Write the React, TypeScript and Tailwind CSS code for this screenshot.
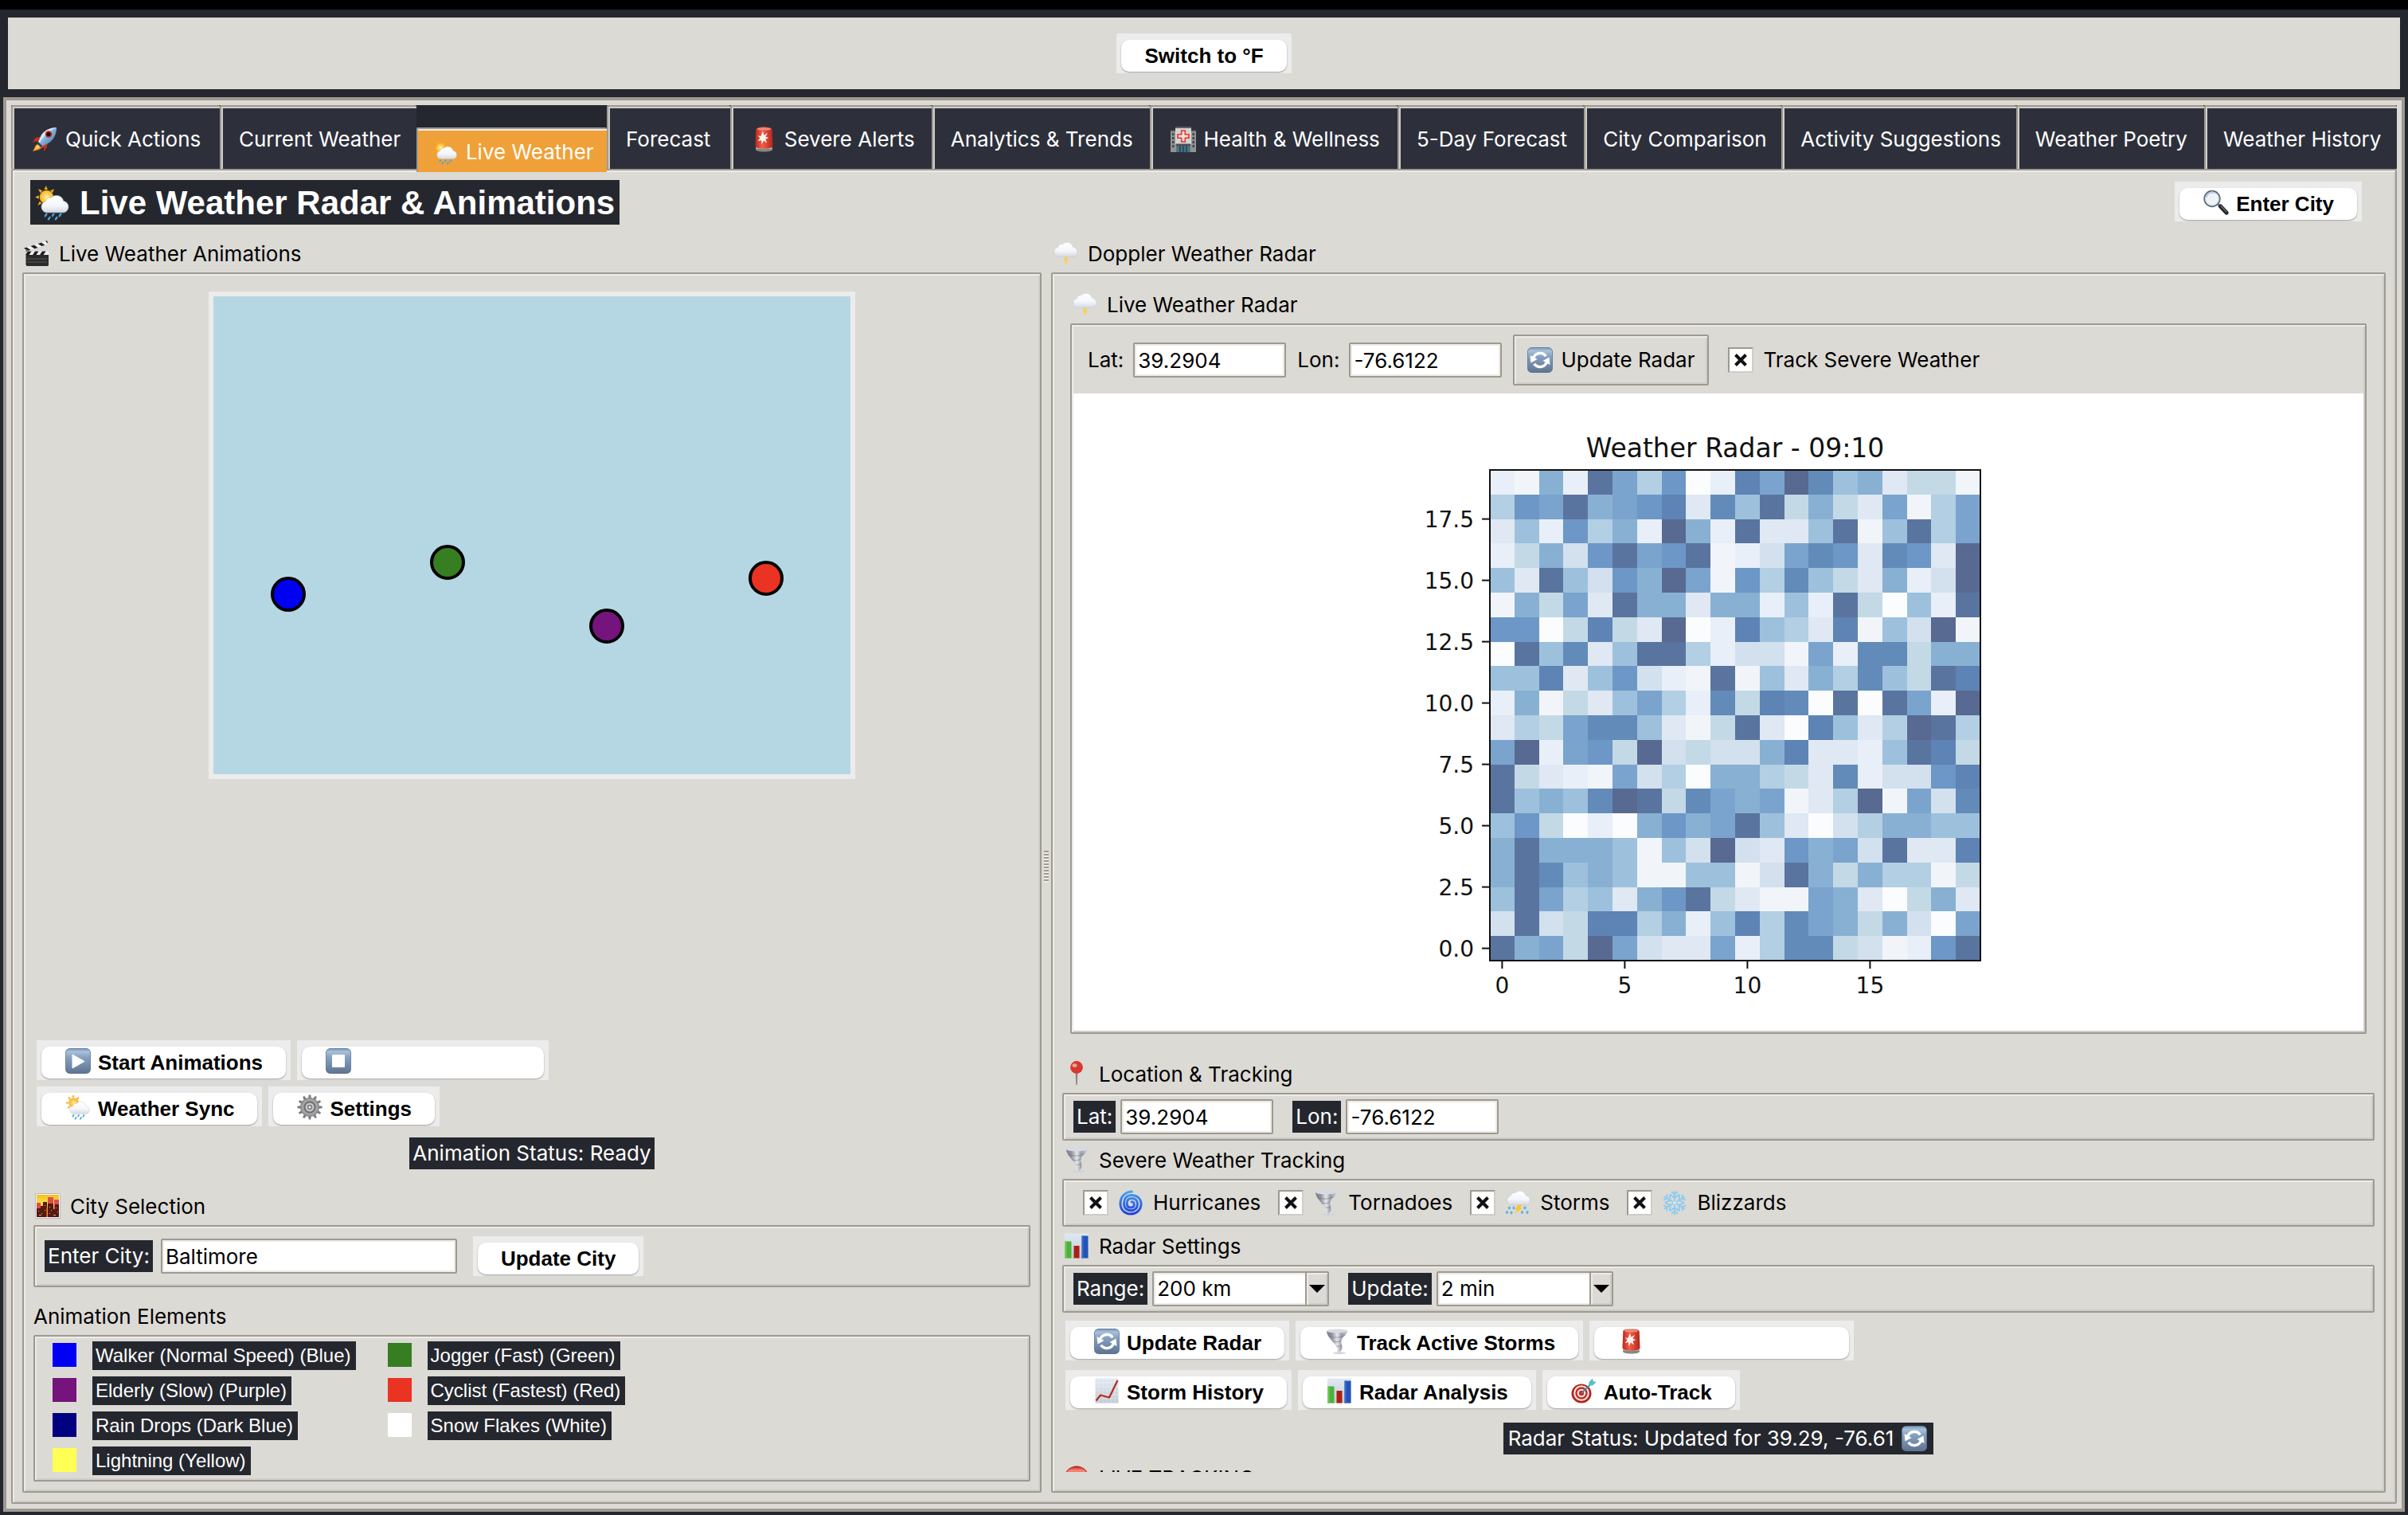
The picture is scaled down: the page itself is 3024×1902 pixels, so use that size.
import React, { ReactNode } from 'react';

/* ---------- icons ---------- */

type IconProps = { className?: string };

function Glyph({ className = 'w-8 h-8', children }: IconProps & { children: ReactNode }) {
  return (
    <svg viewBox="0 0 32 32" className={`${className} shrink-0`} aria-hidden="true">
      {children}
    </svg>
  );
}

const Cloud = ({ fill = 'url(#cloudFill)' }: { fill?: string }) => (
  <path
    d="M9 23.5a5.6 5.6 0 0 1-1.2-11 5 5 0 0 1 5.4-3.6 7.2 7.2 0 0 1 12.3 3.2 5.8 5.8 0 0 1 .3 11.4z"
    fill={fill}
    stroke="#c3cad6"
    strokeWidth=".5"
  />
);

function Defs() {
  return (
    <svg className="absolute h-0 w-0" aria-hidden="true">
      <defs>
        <linearGradient id="cloudFill" x1="0" y1="0" x2="0" y2="1">
          <stop offset="0" stopColor="#ffffff" />
          <stop offset=".6" stopColor="#f4f6fa" />
          <stop offset="1" stopColor="#d3d8e2" />
        </linearGradient>
        <radialGradient id="sunFill">
          <stop offset="0" stopColor="#fff2a0" />
          <stop offset="1" stopColor="#f5ae1c" />
        </radialGradient>
        <linearGradient id="tileFill" x1="0" y1="0" x2="0" y2="1">
          <stop offset="0" stopColor="#7c9cc0" />
          <stop offset=".12" stopColor="#a9c0d8" />
          <stop offset=".35" stopColor="#86a1c1" />
          <stop offset="1" stopColor="#5e7591" />
        </linearGradient>
        <linearGradient id="steel" x1="0" y1="0" x2="1" y2="0">
          <stop offset="0" stopColor="#7b808c" />
          <stop offset=".25" stopColor="#8f939e" />
          <stop offset=".5" stopColor="#e6e8ee" />
          <stop offset=".7" stopColor="#9a9eaa" />
          <stop offset="1" stopColor="#c9ccd6" />
        </linearGradient>
        <linearGradient id="rocketBody" x1="0" y1="0" x2="1" y2="1">
          <stop offset="0" stopColor="#f4f8fc" />
          <stop offset=".5" stopColor="#7fb0dc" />
          <stop offset="1" stopColor="#3d6a9c" />
        </linearGradient>
        <linearGradient id="flame" x1="1" y1="0" x2="0" y2="1">
          <stop offset="0" stopColor="#fff3b0" />
          <stop offset="1" stopColor="#f6a700" />
        </linearGradient>
        <linearGradient id="sirenRed" x1="0" y1="0" x2="1" y2="0">
          <stop offset="0" stopColor="#b8281b" />
          <stop offset=".4" stopColor="#f2604c" />
          <stop offset="1" stopColor="#b3241a" />
        </linearGradient>
        <linearGradient id="swirl" x1="0" y1="0" x2="0" y2="1">
          <stop offset="0" stopColor="#4aa3ea" />
          <stop offset="1" stopColor="#1d3fe0" />
        </linearGradient>
        <linearGradient id="paper" x1="0" y1="0" x2="0" y2="1">
          <stop offset="0" stopColor="#dfe9f3" />
          <stop offset="1" stopColor="#c3cbd2" />
        </linearGradient>
        <linearGradient id="dusk" x1="0" y1="0" x2="0" y2="1">
          <stop offset="0" stopColor="#f2c21f" />
          <stop offset=".4" stopColor="#fbe04a" />
          <stop offset="1" stopColor="#e0631d" />
        </linearGradient>
        <linearGradient id="ball" x1="0" y1="0" x2="0" y2="1">
          <stop offset="0" stopColor="#c9281f" />
          <stop offset=".15" stopColor="#f5857a" />
          <stop offset="1" stopColor="#c8251a" />
        </linearGradient>
      </defs>
    </svg>
  );
}

const Rocket = ({ className }: IconProps) => (
  <Glyph className={className}>
    <path d="M11 12.5 4.5 14 1 20l4-1.5 3 .3z" fill="#c62f1b" />
    <path d="M20 20.5 18.8 26l-4 5.5.4-4.600-2.200-3.400z" fill="#c62f1b" />
    <path d="M10 20.5 5 23l-3.5 7.8L9.5 29l5-4z" fill="#f0641e" />
    <path d="M9 21.5 5.5 24 1.2 31l7.2-3.400 4.600-3.600z" fill="url(#flame)" />
    <path d="M31 1c-8 0-14.500 3.500-19 9.500L8 19l5.500 5.500 8.500-4.500C28 15.500 31 9 31 1z" fill="url(#rocketBody)" />
    <path d="M31 1c-8 0-14.500 3.500-19 9.500L8 19l2 2C13 13 22 5 31 1z" fill="#e9eff6" opacity=".75" />
    <circle cx="21" cy="9.500" r="4.200" fill="#c0281c" />
    <circle cx="21" cy="9.500" r="2.500" fill="#170c10" />
    <path d="m8 19-1.500 2.500 4.500 4.500 2.500-1.500z" fill="#39404c" />
  </Glyph>
);

const SunRain = ({ className }: IconProps) => (
  <Glyph className={className}>
    <g fill="#f2a81d">
      <path d="m10 0 1.600 3.600H8.400zM3 3l3.800 1.600L4.700 6.700zM17.500 3l-1.600 3.700-2.100-2.100zM0 10.500l3.500-1.600v3.200zM2.500 18l1.700-3.700 2 2z" />
    </g>
    <circle cx="10.500" cy="10.500" r="6.300" fill="url(#sunFill)" />
    <g transform="translate(2.500 3) scale(.92)">
      <Cloud />
    </g>
    <g stroke="#4aa6dc" strokeWidth="1.700" strokeLinecap="round">
      <path d="m10.500 26-1.200 1.800M17 26l-1 1.600M23.500 26l-1.200 1.800M13.500 29l-1.200 1.800M20 29l-1.200 1.800" />
    </g>
  </Glyph>
);

const ThunderCloud = ({ className }: IconProps) => (
  <Glyph className={className}>
    <g transform="translate(-2 -5) scale(1.080)">
      <Cloud />
    </g>
    <path d="M15 21h4.500l-1.800 3.400h2.600L14.600 31l1.600-5h-2.500z" fill="#f7cf56" />
  </Glyph>
);

const StormCloud = ({ className }: IconProps) => (
  <Glyph className={className}>
    <g transform="translate(-1 -6) scale(1.060)">
      <Cloud />
    </g>
    <path d="M17 18.500h4l-2 4h3.500L12 30l3.500-5.500h-3.500z" fill="#f8c72c" />
    <g fill="#5cb4e4">
      <ellipse cx="5.500" cy="22.500" rx="1.600" ry="2" />
      <ellipse cx="11" cy="22.500" rx="1.500" ry="1.900" />
      <ellipse cx="2.500" cy="28" rx="1.600" ry="2" />
      <ellipse cx="8" cy="28.500" rx="1.600" ry="2" />
      <ellipse cx="25" cy="22.500" rx="1.600" ry="2" />
      <ellipse cx="21.500" cy="28" rx="1.600" ry="2" />
      <ellipse cx="28" cy="28" rx="1.600" ry="2" />
    </g>
  </Glyph>
);

const Siren = ({ className }: IconProps) => (
  <Glyph className={className}>
    <path d="M6 26h21v2.500c0 2-4 3-10.500 3S6 30.500 6 28.500z" fill="#8a8682" />
    <path d="M6 27h21" stroke="#c9c6c2" strokeWidth="1" />
    <path d="M5.500 24 6.300 3.500C6.400 1.500 10 .5 16.500.5s10.100 1 10.200 3L27.500 24c0 2-4 3.500-11 3.500S5.500 26 5.500 24z" fill="url(#sirenRed)" />
    <path d="M8 3c0-1 3.500-1.700 8.500-1.700s8.500.7 8.500 1.700-3.500 1.500-8.500 1.500S8 4 8 3z" fill="#f08b7c" />
    <path d="m15 5.500 1.500 5.200 4.500-3-2.500 5 4 1.300-4 1.600 1.500 5-4-3-2.500 4.700-.5-5.300-4.500 1.300 3-4-3-3 4 .8z" fill="#fff" opacity=".92" />
  </Glyph>
);

const Hospital = ({ className }: IconProps) => (
  <Glyph className={className}>
    <path d="M0 5h32v27H0z" fill="#6d7376" />
    <path d="M0 5h7v27H0zM25 5h7v27h-7z" fill="#8f9392" />
    <path d="M6 1h20v21H6z" fill="#d5d3cf" />
    <path d="M6 0h20v2H6zM0 4.500h6v1.500H0zM26 4.500h6v1.500h-6z" fill="#5c5f60" />
    <g fill="#3e4a50">
      <path d="M2 8h2.500v3H2zM2 13h2.500v3H2zM2 18h2.500v3H2zM2 23h2.500v3H2zM27.500 8H30v3h-2.500zM27.500 13H30v3h-2.500zM27.500 18H30v3h-2.500zM27.500 23H30v3h-2.500z" />
    </g>
    <path d="M13.700 5h4.600v4.700H23v4.600h-4.700V19h-4.600v-4.700H9V9.700h4.700z" fill="#f5dedb" stroke="#d93a32" strokeWidth="1.600" />
    <path d="M8 23h16v9H8z" fill="#4a7086" />
    <path d="M12 24v8M16 24v8M20 24v8" stroke="#28414f" strokeWidth="1.500" />
    <path d="M7 21.500h18V24H7z" fill="#4b4e50" />
  </Glyph>
);

const Magnifier = ({ className }: IconProps) => (
  <Glyph className={className}>
    <path d="m18.500 18.500 3 3" stroke="#8b97a5" strokeWidth="3" />
    <path d="m21.500 21 7.500 8" stroke="#22262b" strokeWidth="5.200" strokeLinecap="round" />
    <path d="m22 20.500 7 7.500" stroke="#6a7178" strokeWidth="1.200" strokeLinecap="round" />
    <circle cx="11" cy="11.500" r="9.800" fill="#eef3f7" stroke="#5d6a78" strokeWidth="1.800" />
    <path d="M4 9a7.600 7.600 0 0 1 10-5" stroke="#a7c6e6" strokeWidth="1.800" fill="none" strokeLinecap="round" />
    <circle cx="11" cy="11.500" r="8.300" fill="none" stroke="#c6d2dd" strokeWidth=".8" />
  </Glyph>
);

const Clapper = ({ className }: IconProps) => (
  <Glyph className={className}>
    <path d="M2.500 17H31v13.500a1.500 1.500 0 0 1-1.500 1.500h-25a2 2 0 0 1-2-2z" fill="#2b2b2b" />
    <path d="M2.500 13.500H31V18H2.500z" fill="#efefef" />
    <path d="M5 13.500h4.500l-3 4.500h-4v-1zM14 13.500h4.500l-3 4.500H11zM23 13.500h4.500l-3 4.500H20z" fill="#1f1f1f" />
    <path d="M0 9.500 29 0l1.500 4.200L2 14z" fill="#f2f2f2" />
    <path d="m3.500 8.400 5 3.400-4 1.300L0 9.500zM13 5.500l4.600 3.400-4.300 1.400L8.500 6.900zM22 2.500l4.500 3.200-4.300 1.400-4.600-3.200zM29 0l1.500 4.200-3.500-3.400z" fill="#242424" />
    <path d="M4 23h25M4 27h25" stroke="#5b5b5b" strokeWidth="1" />
    <circle cx="3.500" cy="13" r="1.600" fill="#888" />
  </Glyph>
);

const Tile = () => (
  <>
    <rect x=".1" y=".1" width="31.800" height="31.800" rx="5.500" fill="#5a7290" />
    <rect x=".8" y=".8" width="30.400" height="30.400" rx="5" fill="url(#tileFill)" />
  </>
);

const Play = ({ className }: IconProps) => (
  <Glyph className={className}>
    <Tile />
    <path d="M9 8v17l15-8.500z" fill="#fff" stroke="#fff" strokeWidth="1" strokeLinejoin="round" />
  </Glyph>
);

const Stop = ({ className }: IconProps) => (
  <Glyph className={className}>
    <Tile />
    <rect x="8" y="8" width="16" height="16" rx="1" fill="#fff" />
  </Glyph>
);

const Refresh = ({ className }: IconProps) => (
  <Glyph className={className}>
    <Tile />
    <g fill="none" stroke="#fff" strokeWidth="3.400">
      <path d="M7.300 15A9 9 0 0 1 22 9.500" transform="rotate(14 16 16)" />
      <path d="M24.700 17A9 9 0 0 1 10 22.500" transform="rotate(14 16 16)" />
    </g>
    <path d="m3.500 10 1 9.500 8-4.500zM28.500 22l-1-9.500-8 4.500z" fill="#fff" />
  </Glyph>
);

const Gear = ({ className }: IconProps) => (
  <Glyph className={className}>
    <g fill="#7a7a7c">
      {[0, 30, 60, 90, 120, 150, 180, 210, 240, 270, 300, 330].map((a) => (
        <path key={a} d="m14 6 .8-5.600h2.400L18 6z" transform={`rotate(${a} 16 16)`} />
      ))}
    </g>
    <circle cx="16" cy="16" r="12" fill="#8b8b8d" />
    <circle cx="16" cy="16" r="10.500" fill="#a3a3a5" />
    <circle cx="16" cy="16" r="7.500" fill="#6d6d70" />
    <circle cx="16" cy="16" r="5.500" fill="#c9c9cb" />
    <circle cx="16" cy="16" r="3.200" fill="#7d7d80" />
    <circle cx="16" cy="16" r="1.600" fill="#f3f3f3" />
  </Glyph>
);

const CitySunset = ({ className }: IconProps) => (
  <Glyph className={className}>
    <rect x=".5" y=".5" width="31" height="31" fill="#f5f5f5" stroke="#b9bdc2" />
    <rect x="2" y="2" width="28" height="28" fill="url(#dusk)" />
    <path d="M2 12h5v18H2zM16 5h7v25h-7zM24 8h6v22h-6z" fill="#d9504a" />
    <path d="M2 19h5v-3h3v-5h5v9h1v-7h7v7h2v-6h5v16H2z" fill="#571913" />
    <path d="M14.500 18h1.500v12h-1.500z" fill="#f4902a" />
    <g fill="#e9b04a">
      <path d="M4 22h1v1H4zM8 25h1v1H8zM12 15h1v1h-1zM12 21h1v1h-1zM18 17h1v1h-1zM20 21h1v1h-1zM26 18h1v1h-1zM28 23h1v1h-1zM18 25h1v1h-1zM5 27h3v1H5zM23 27h3v1h-3z" />
    </g>
  </Glyph>
);

const Pin = ({ className }: IconProps) => (
  <Glyph className={className}>
    <path d="M14.700 14h2.600l-.5 15c0 1.500-1.600 1.500-1.600 0z" fill="#93807a" />
    <circle cx="16" cy="8" r="7.900" fill="#d63a30" />
    <ellipse cx="13.500" cy="5.500" rx="3" ry="2.300" fill="#f4a096" />
  </Glyph>
);

const Tornado = ({ className }: IconProps) => (
  <Glyph className={className}>
    <ellipse cx="19" cy="30.700" rx="8" ry="1.200" fill="#cfd0dc" />
    <path
      d="M3 3c.2 4 2.300 7.500 6 11.500 3 3.300 5.500 6 6.800 9.500.8 2.400.7 4.500.2 7 3.500-1 6.500-3.500 6.500-7.500 0-3.500-2-5.500-1-9 1.200-4 7-6.500 8-11.500C25 .5 7 .5 3 3z"
      fill="url(#steel)"
    />
    <ellipse cx="16.200" cy="3" rx="13" ry="2.400" fill="#d7dae2" />
    <path d="M5.500 9c6 3 14 3 20.500-1M10.500 16c4 1.500 7 1 11-1M15.500 22c2 .6 4 .4 6.500-.8" stroke="#666b77" strokeWidth="1" fill="none" opacity=".55" />
  </Glyph>
);

const Cyclone = ({ className }: IconProps) => (
  <Glyph className={className}>
    <path
      d="M17.500 2C9 2 3 8.500 3 17c0 8 5.500 13 13 13s13-5.500 13-12.500S23.500 6.500 17 6.500 7.500 11 7.500 17s4 8.800 8.800 8.800 8.200-3.500 8.200-8.100-3-7.200-7.300-7.200-6 2.700-6 6.200 2 5.300 4.800 5.300 4.300-1.800 4.300-4-1.400-3.300-3.200-3.300"
      fill="none"
      stroke="url(#swirl)"
      strokeWidth="3"
      strokeLinecap="round"
    />
  </Glyph>
);

const Snowflake = ({ className }: IconProps) => (
  <Glyph className={className}>
    <g fill="none" stroke="#8ccbf0" strokeWidth="1.800" strokeLinecap="round">
      {[0, 60, 120, 180, 240, 300].map((a) => (
        <path key={a} d="M16 16V1.500M16 5.500l-3.500-3M16 5.500l3.500-3M16 10l-5-4M16 10l5-4" transform={`rotate(${a} 16 16)`} />
      ))}
    </g>
    <circle cx="16" cy="16" r="2" fill="#cdeafb" />
  </Glyph>
);

const BarChart = ({ className }: IconProps) => (
  <Glyph className={className}>
    <rect x="1" y=".5" width="30" height="31" fill="url(#paper)" />
    <path d="M1.500 10.500h8V31.500h-8z" fill="#4db23a" />
    <path d="M12.500 16h7v15.500h-7z" fill="#ad1f16" />
    <path d="M22.500 3.500h8V31.500h-8z" fill="#2453b8" />
    <path d="M1.500 10.500h2V31.500h-2z" fill="#6acb55" />
    <path d="M22.500 3.500h2V31.500h-2z" fill="#3c6fd2" />
  </Glyph>
);

const LineChart = ({ className }: IconProps) => (
  <Glyph className={className}>
    <rect x="1.500" y=".5" width="29" height="31" fill="url(#paper)" />
    <path d="M6 1v30M11 1v30M16 1v30M21 1v30M26 1v30M2 6h28M2 11h28M2 16h28M2 21h28M2 26h28" stroke="#fff" strokeWidth=".5" opacity=".6" />
    <path d="M2.500 28.500 8 21.500l11 3L29.500 3" stroke="#b22a20" strokeWidth="2.200" fill="none" strokeLinejoin="round" />
  </Glyph>
);

const Target = ({ className }: IconProps) => (
  <Glyph className={className}>
    <ellipse cx="13" cy="19.500" rx="12.500" ry="12" fill="#b3251d" />
    <circle cx="13" cy="19" r="9.800" fill="#f6e9e7" />
    <circle cx="13" cy="19" r="7.700" fill="#c32d24" />
    <circle cx="13" cy="19" r="5.300" fill="#f6e9e7" />
    <circle cx="13" cy="19" r="3.200" fill="#c32d24" />
    <path d="m13 19 11-10.500" stroke="#3b8f9c" strokeWidth="1.800" />
    <path d="m22 9.500.5-4.500L27 .5l.8 3.700 4 .8-4.600 4.300z" fill="#5bbcc8" />
  </Glyph>
);

const RedBall = ({ className }: IconProps) => (
  <Glyph className={className}>
    <circle cx="16" cy="16" r="15.500" fill="#b3241b" />
    <circle cx="16" cy="16" r="14.500" fill="url(#ball)" />
  </Glyph>
);

/* ---------- shared widgets ---------- */

function Frame({
  icon,
  title,
  children,
  className = '',
  bodyClass = '',
}: {
  icon?: ReactNode;
  title: string;
  children: ReactNode;
  className?: string;
  bodyClass?: string;
}) {
  return (
    <section className={`flex flex-col ${className}`}>
      <h2 className={`flex h-10 shrink-0 items-start leading-[34px] ${icon ? 'gap-3 px-0.5' : ''}`}>
        {icon}
        <span>{title}</span>
      </h2>
      <div
        className={`rounded-[2px] border-2 border-[#9e9a91] p-0.5 shadow-[inset_2px_2px_0_#eeebe7,inset_-2px_-2px_0_#cfcdc8] ${bodyClass}`}
      >
        {children}
      </div>
    </section>
  );
}

function PushButton({ icon, label, className = '' }: { icon?: ReactNode; label?: string; className?: string }) {
  return (
    <div className={`bg-[#ececec] px-1.5 pt-2 pb-0.5 ${className}`}>
      <button
        type="button"
        aria-label={label ? undefined : 'Action'}
        className="flex h-10 w-full items-center gap-2 rounded-[10px] bg-white px-[29px] font-['Liberation_Sans',Arial,sans-serif] font-bold whitespace-nowrap shadow-[0_1px_2px_rgba(0,0,0,0.35)]"
      >
        {icon && <span className="mb-1 px-px">{icon}</span>}
        {label}
      </button>
    </div>
  );
}

function Field({ id, value, className }: { id: string; value: string; className: string }) {
  return (
    <input
      id={id}
      type="text"
      defaultValue={value}
      className={`h-11 rounded-[2px] border-2 border-[#9e9a91] bg-white px-1 shadow-[inset_0_0_0_2px_#eeebe7] outline-none ${className}`}
    />
  );
}

function Combo({ id, options }: { id: string; options: string[] }) {
  return (
    <div className="relative h-11 w-[222px] rounded-[2px] border-2 border-[#9e9a91] bg-white">
      <select
        id={id}
        className="h-10 w-full appearance-none bg-transparent px-1 shadow-[inset_2px_2px_0_#eeebe7,inset_-2px_-2px_0_#eeebe7] outline-none"
      >
        {options.map((o) => (
          <option key={o}>{o}</option>
        ))}
      </select>
      <span className="pointer-events-none absolute top-0 right-0 flex h-10 w-7 items-center justify-center border-l-2 border-[#9e9a91] bg-[#dcdad5] shadow-[inset_2px_2px_0_#eeebe7,inset_-2px_-2px_0_#cfcdc8]">
        <svg viewBox="0 0 20 10" className="h-2.5 w-5" aria-hidden="true">
          <path d="M0 0h20L10 10z" />
        </svg>
      </span>
    </div>
  );
}

function Check({ label, icon }: { label: string; icon?: ReactNode }) {
  return (
    <label className="flex items-center gap-3">
      <span className="relative h-8 w-8 shrink-0">
        <input
          type="checkbox"
          defaultChecked
          className="peer block h-8 w-8 appearance-none border-2 border-[#9e9a91] border-r-[#cfcdc8] border-b-[#cfcdc8] bg-white"
        />
        <svg
          viewBox="0 0 32 32"
          className="pointer-events-none absolute inset-0 hidden h-8 w-8 peer-checked:block"
          aria-hidden="true"
        >
          <path d="m9.500 9.500 13 13m0-13-13 13" stroke="#111" strokeWidth="4" />
        </svg>
      </span>
      {icon}
      <span>{label}</span>
    </label>
  );
}

function DarkLabel({ htmlFor, children }: { htmlFor: string; children: ReactNode }) {
  return (
    <label htmlFor={htmlFor} className="h-10 bg-[#25272e] px-1 leading-10 whitespace-nowrap text-white">
      {children}
    </label>
  );
}

/* ---------- tabs ---------- */

const TABS: { label: string; icon?: ReactNode; width: string }[] = [
  { label: 'Quick Actions', icon: <Rocket />, width: 'flex-[262_1_0]' },
  { label: 'Current Weather', width: 'flex-[247_1_0]' },
  { label: 'Live Weather', icon: <SunRain />, width: 'flex-[239_1_0]' },
  { label: 'Forecast', width: 'flex-[154_1_0]' },
  { label: 'Severe Alerts', icon: <Siren />, width: 'flex-[253_1_0]' },
  { label: 'Analytics & Trends', width: 'flex-[274_1_0]' },
  { label: 'Health & Wellness', icon: <Hospital />, width: 'flex-[312_1_0]' },
  { label: '5-Day Forecast', width: 'flex-[234_1_0]' },
  { label: 'City Comparison', width: 'flex-[248_1_0]' },
  { label: 'Activity Suggestions', width: 'flex-[295_1_0]' },
  { label: 'Weather Poetry', width: 'flex-[236_1_0]' },
  { label: 'Weather History', width: 'flex-[242_1_0]' },
];

function TabBar() {
  return (
    <nav role="tablist" className="flex h-20 bg-[#25272e] text-white">
      {TABS.map((t) => {
        const active = t.label === 'Live Weather';
        return (
          <button
            key={t.label}
            type="button"
            role="tab"
            aria-selected={active}
            className={`flex min-w-0 items-center rounded-t-[2px] border-t-2 border-l-2 border-[#9e9a91] pt-1 ${t.width} ${
              active
                ? 'relative z-10 mt-7 -mb-1 bg-[#f0a038] shadow-[inset_0_2px_0_#eeebe7]'
                : 'bg-[#2d303b] shadow-[inset_2px_2px_0_#cfcdc8]'
            }`}
          >
            <span className={`flex min-w-0 items-center gap-2.5 whitespace-nowrap ${active ? 'pl-4' : 'pl-[22px]'}`}>
              {t.icon && <span className="pl-0.5">{t.icon}</span>}
              {t.label}
            </span>
          </button>
        );
      })}
    </nav>
  );
}

/* ---------- animation panel ---------- */

const WALKERS = [
  { x: 100, y: 380, fill: '#0000f5' },
  { x: 300, y: 340, fill: '#377d22' },
  { x: 500, y: 420, fill: '#75147c' },
  { x: 700, y: 360, fill: '#ea3323' },
];

const LEGEND = [
  ['bg-[#0000f5]', 'Walker (Normal Speed) (Blue)'],
  ['bg-[#377d22]', 'Jogger (Fast) (Green)'],
  ['bg-[#75147c]', 'Elderly (Slow) (Purple)'],
  ['bg-[#ea3323]', 'Cyclist (Fastest) (Red)'],
  ['bg-[#000080]', 'Rain Drops (Dark Blue)'],
  ['bg-white', 'Snow Flakes (White)'],
  ['bg-[#ffff54]', 'Lightning (Yellow)'],
];

function AnimationPanel() {
  return (
    <Frame
      icon={<Clapper />}
      title="Live Weather Animations"
      className="min-w-0 flex-[1280_1_0]"
      bodyClass="flex min-h-0 flex-1 flex-col px-3 pb-3"
    >
      <svg viewBox="0 0 812 612" className="mt-5 w-[812px] self-center" role="img" aria-label="Animation canvas">
        <rect width="812" height="612" fill="#ececec" />
        <rect x="6" y="6" width="800" height="600" fill="#b5d7e4" />
        {WALKERS.map((w) => (
          <circle key={w.fill} cx={w.x} cy={w.y} r="20" fill={w.fill} stroke="#000" strokeWidth="4" />
        ))}
      </svg>
      <div className="flex-1" />
      <div className="flex gap-2 px-1">
        <PushButton icon={<Play />} label="Start Animations" />
        <PushButton icon={<Stop />} className="w-[316px]" />
      </div>
      <div className="mt-2 flex gap-2 px-1">
        <PushButton icon={<SunRain />} label="Weather Sync" />
        <PushButton icon={<Gear />} label="Settings" />
      </div>
      <p className="mt-3.5 h-10 self-center bg-[#25272e] px-1 leading-10 text-white">Animation Status: Ready</p>
      <Frame icon={<CitySunset />} title="City Selection" className="mt-[30px]" bodyClass="flex items-center px-3 py-3">
        <DarkLabel htmlFor="city">Enter City:</DarkLabel>
        <Field id="city" value="Baltimore" className="mr-5 ml-2.5 w-[372px]" />
        <PushButton label="Update City" />
      </Frame>
      <Frame title="Animation Elements" className="mt-5">
        <ul className="grid grid-cols-[auto_1fr] gap-x-10 pl-5 font-['Liberation_Sans',Arial,sans-serif] text-2xl">
          {LEGEND.map(([color, name]) => (
            <li key={name} className="flex h-11 items-center gap-5">
              <span className={`mb-0.5 h-[30px] w-[30px] ${color}`} />
              <span className="h-9 bg-[#25272e] pr-1.5 pl-1 leading-9 text-white">{name}</span>
            </li>
          ))}
        </ul>
      </Frame>
    </Frame>
  );
}

/* ---------- radar panel ---------- */

const SHADES: Record<string, string> = {
  '0': '#fafcfe',
  '1': '#f1f5fa',
  '2': '#e8eff8',
  '3': '#dfe8f3',
  '4': '#d3e0ee',
  '5': '#c3d9e6',
  '6': '#b2cfe3',
  '7': '#9dc1dc',
  '8': '#88b0d3',
  '9': '#7aa4cd',
  a: '#6c97c6',
  b: '#628bba',
  c: '#5e83b5',
  d: '#5a74a0',
  e: '#586a91',
};

/* One string per row, top row first; each character is an intensity level. */
const CELLS = [
  '2182d96a02c9eb783551',
  '6a9d89ac3b7d58539169',
  '372a682e82d337d17d69',
  '2584ad9ad1249ba3ba3e',
  '73d74a8e91a6b753824e',
  '18593d88388272d5072d',
  'aa05c53e02c763c174e1',
  '0d7b37dd6244192bb588',
  '77c37a421d17386b75dc',
  '281537962b5cb0d0d92e',
  '3659bb7315d30c736ed6',
  '9e29a5e45448c3327dc5',
  'd5321946088653b244ac',
  'd787bed5b989136e194b',
  '7a50208a89d730468877',
  '8d8887174e43a894d33c',
  '8db787117714d8586615',
  '7d96738ad53119830583',
  '4d45cc6827c6b9858409',
  'd895e9433926bb5412ad',
];

const Y_TICKS = [0, 2.5, 5, 7.5, 10, 12.5, 15, 17.5];
const X_TICKS = [0, 5, 10, 15];

function RadarPlot() {
  const size = 616;
  const cell = size / 20;
  const left = 523;
  const top = 96;
  const bottom = top + size;
  return (
    <svg
      viewBox="0 0 1620 800"
      className="block w-full bg-white font-['DejaVu_Sans',Verdana,sans-serif]"
      role="img"
      aria-label="Weather radar heat map"
    >
      <text x={left + size / 2} y={80} fontSize="33" textAnchor="middle" fill="#111">
        Weather Radar - 09:10
      </text>
      <g shapeRendering="crispEdges">
        {CELLS.map((row, r) =>
          row.split('').map((c, i) => (
            <rect key={`${r}-${i}`} x={left + i * cell} y={top + r * cell} width={cell} height={cell} fill={SHADES[c]} />
          )),
        )}
      </g>
      <rect x={left} y={top} width={size} height={size} fill="none" stroke="#111" strokeWidth="2" />
      {Y_TICKS.map((v) => {
        const y = bottom - (v + 0.5) * cell;
        return (
          <g key={v}>
            <path d={`M${left - 10} ${y}h10`} stroke="#111" strokeWidth="2" />
            <text x={left - 20} y={y + 10} fontSize="28" textAnchor="end" fill="#111">
              {v.toFixed(1)}
            </text>
          </g>
        );
      })}
      {X_TICKS.map((v) => {
        const x = left + (v + 0.5) * cell;
        return (
          <g key={v}>
            <path d={`M${x} ${bottom}v10`} stroke="#111" strokeWidth="2" />
            <text x={x} y={bottom + 41} fontSize="28" textAnchor="middle" fill="#111">
              {v}
            </text>
          </g>
        );
      })}
    </svg>
  );
}

function RadarPanel() {
  return (
    <Frame
      icon={<ThunderCloud />}
      title="Doppler Weather Radar"
      className="min-w-0 flex-[1676_1_0]"
      bodyClass="min-h-0 flex-1 flex flex-col px-3 pb-6"
    >
      <div className="min-h-0 flex-1 overflow-hidden">
        <Frame icon={<ThunderCloud />} title="Live Weather Radar" className="mx-2.5 mt-5">
          <div className="flex h-[84px] items-center px-[18px]">
            <label htmlFor="lat-top">Lat:</label>
            <Field id="lat-top" value="39.2904" className="mr-3.5 ml-3 w-48" />
            <label htmlFor="lon-top">Lon:</label>
            <Field id="lon-top" value="-76.6122" className="mr-3.5 ml-3 w-48" />
            <button
              type="button"
              className="mr-6 flex h-16 items-center gap-2.5 rounded-[2px] border-2 border-[#9e9a91] px-4 whitespace-nowrap shadow-[inset_2px_2px_0_#eeebe7,inset_-2px_-2px_0_#cfcdc8]"
            >
              <Refresh />
              Update Radar
            </button>
            <Check label="Track Severe Weather" />
          </div>
          <RadarPlot />
        </Frame>

        <Frame icon={<Pin />} title="Location & Tracking" className="mt-[34px]" bodyClass="flex items-center py-1.5 px-3">
          <DarkLabel htmlFor="lat">Lat:</DarkLabel>
          <Field id="lat" value="39.2904" className="mr-6 ml-1.5 w-48" />
          <DarkLabel htmlFor="lon">Lon:</DarkLabel>
          <Field id="lon" value="-76.6122" className="ml-1.5 w-48" />
        </Frame>

        <Frame
          icon={<Tornado />}
          title="Severe Weather Tracking"
          className="mt-2"
          bodyClass="flex h-[60px] items-center gap-[22px] pl-6"
        >
          <Check icon={<Cyclone />} label="Hurricanes" />
          <Check icon={<Tornado />} label="Tornadoes" />
          <Check icon={<StormCloud />} label="Storms" />
          <Check icon={<Snowflake />} label="Blizzards" />
        </Frame>

        <Frame icon={<BarChart />} title="Radar Settings" className="mt-2" bodyClass="flex items-center gap-1.5 py-1.5 px-3">
          <DarkLabel htmlFor="range">Range:</DarkLabel>
          <Combo id="range" options={['200 km', '100 km', '50 km']} />
          <span className="w-3" />
          <DarkLabel htmlFor="update">Update:</DarkLabel>
          <Combo id="update" options={['2 min', '5 min', '10 min']} />
        </Frame>

        <div className="mt-2.5 flex gap-2 px-1">
          <PushButton icon={<Refresh />} label="Update Radar" />
          <PushButton icon={<Tornado />} label="Track Active Storms" />
          <PushButton icon={<Siren />} className="w-[332px]" />
        </div>
        <div className="mt-3 flex gap-2 px-1">
          <PushButton icon={<LineChart />} label="Storm History" />
          <PushButton icon={<BarChart />} label="Radar Analysis" />
          <PushButton icon={<Target />} label="Auto-Track" />
        </div>
        <p className="mx-auto mt-4 flex h-10 w-fit items-center gap-2.5 bg-[#25272e] pr-2 pl-1.5 text-white">
          Radar Status: Updated for 39.29, -76.61
          <Refresh />
        </p>
        <h2 className="mt-3.5 flex gap-3 px-0.5 leading-8">
          <RedBall />
          LIVE TRACKING
        </h2>
      </div>
    </Frame>
  );
}

/* ---------- page ---------- */

export default function App() {
  return (
    <div className="flex h-screen flex-col overflow-hidden border-t-[12px] border-black bg-[#25272e] pb-1 font-['Inter',sans-serif] text-[26px] leading-8 text-black">
      <Defs />
      <header className="mx-2.5 my-2.5 flex shrink-0 justify-center bg-[#dcdad5] py-5">
        <PushButton label="Switch to °F" />
      </header>

      <main className="mx-1 flex min-h-0 flex-1 flex-col border-4 border-[#9e9a91] bg-[#dcdad5] p-1.5">
        <TabBar />
        <div
          role="tabpanel"
          className="flex min-h-0 flex-1 flex-col rounded-[2px] border-2 border-[#9e9a91] px-3 pt-0.5 pb-3 shadow-[inset_2px_2px_0_#eeebe7,inset_-2px_-2px_0_#cfcdc8]"
        >
          <div className="flex shrink-0 items-start justify-between px-2.5 pt-2.5 pb-5">
            <h1 className="flex h-14 items-center gap-3 bg-[#25272e] px-1.5 pt-0.5 font-['Liberation_Sans',Arial,sans-serif] text-[42px] font-bold whitespace-nowrap text-white">
              <SunRain className="h-11 w-11" />
              Live Weather Radar &amp; Animations
            </h1>
            <div className="mt-0.5 mr-5">
              <PushButton icon={<Magnifier />} label="Enter City" />
            </div>
          </div>
          <div className="flex min-h-0 flex-1">
            <AnimationPanel />
            <div className="flex w-3 shrink-0 items-center justify-center">
              <span className="h-10 w-1.5 bg-[repeating-linear-gradient(#9e9a91_0_2px,#eeebe7_2px_4px)]" />
            </div>
            <RadarPanel />
          </div>
        </div>
      </main>
    </div>
  );
}
